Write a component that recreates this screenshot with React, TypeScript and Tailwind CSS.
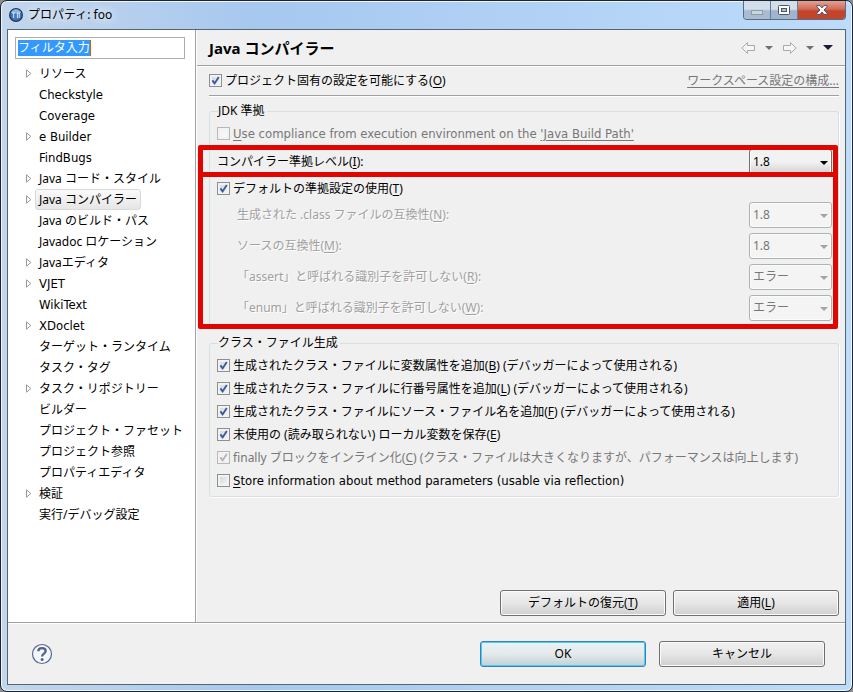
import { useState } from "react";
import type { ReactNode } from "react";

const treeItems = [
  { label: "リソース", expandable: true },
  { label: "Checkstyle", latin: true },
  { label: "Coverage", latin: true },
  { label: "e Builder", expandable: true, latin: true },
  { label: "FindBugs", latin: true },
  { label: "Java コード・スタイル", expandable: true },
  { label: "Java コンパイラー", expandable: true },
  { label: "Java のビルド・パス" },
  { label: "Javadoc ロケーション" },
  { label: "Javaエディタ", expandable: true },
  { label: "VJET", expandable: true, latin: true },
  { label: "WikiText", latin: true },
  { label: "XDoclet", expandable: true, latin: true },
  { label: "ターゲット・ランタイム" },
  { label: "タスク・タグ" },
  { label: "タスク・リポジトリー", expandable: true },
  { label: "ビルダー" },
  { label: "プロジェクト・ファセット" },
  { label: "プロジェクト参照" },
  { label: "プロパティエディタ" },
  { label: "検証", expandable: true },
  { label: "実行/デバッグ設定" },
];

const classFileOptions = [
  { before: "生成されたクラス・ファイルに変数属性を追加(", key: "B", after: ") (デバッガーによって使用される)", checked: true },
  { before: "生成されたクラス・ファイルに行番号属性を追加(", key: "L", after: ") (デバッガーによって使用される)", checked: true },
  { before: "生成されたクラス・ファイルにソース・ファイル名を追加(", key: "F", after: ") (デバッガーによって使用される)", checked: true },
  { before: "未使用の (読み取られない) ローカル変数を保存(", key: "E", after: ")", checked: true },
  { before: "finally ブロックをインライン化(", key: "C", after: ") (クラス・ファイルは大きくなりますが、パフォーマンスは向上します)", checked: true, disabled: true },
  { before: "", key: "S", after: "tore information about method parameters (usable via reflection)", checked: false, latin: true },
];

const complianceFields = [
  { id: "classCompat", before: "生成された .class ファイルの互換性(", key: "N", options: ["1.8", "1.7", "1.6"] },
  { id: "sourceCompat", before: "ソースの互換性(", key: "M", options: ["1.8", "1.7", "1.6"] },
  { id: "assertId", before: "「assert」と呼ばれる識別子を許可しない(", key: "R", options: ["エラー", "警告", "無視"] },
  { id: "enumId", before: "「enum」と呼ばれる識別子を許可しない(", key: "W", options: ["エラー", "警告", "無視"] },
];

// labels with no Japanese in them
const latinText = "font-['DejaVu_Sans_Condensed',sans-serif] text-[13px] leading-4";

function Key({ children }: { children: ReactNode }) {
  return <span className="underline underline-offset-2">{children}</span>;
}

function CheckRow({
  children,
  checked = false,
  disabled = false,
  latin = false,
}: {
  children: ReactNode;
  checked?: boolean;
  disabled?: boolean;
  latin?: boolean;
}) {
  const [on, setOn] = useState(checked);

  return (
    <label className={`flex items-center gap-[3px] whitespace-nowrap ${disabled ? "text-[#777777]" : ""}`}>
      <span className="relative flex h-[13px] w-[13px] shrink-0">
        <input
          type="checkbox"
          checked={on}
          disabled={disabled}
          onChange={(e) => setOn(e.target.checked)}
          className="h-[13px] w-[13px] appearance-none border border-[#8e8f8f] bg-linear-to-br from-[#cfd4da] to-[#f8f8f8] shadow-[inset_0_0_0_2px_#f2f2f2] disabled:border-[#b8b8b8] disabled:from-[#f0f0f0] disabled:to-[#fafafa]"
        />
        {on && (
          <svg viewBox="0 0 13 13" className="pointer-events-none absolute inset-0 h-[13px] w-[13px]">
            <path
              d="M3.4 6.4 L5.6 9.4 L9.8 3"
              fill="none"
              stroke={disabled ? "#b4b4b4" : "#3c5a9a"}
              strokeWidth="1.9"
            />
          </svg>
        )}
      </span>
      <span className={latin ? latinText : ""}>{children}</span>
    </label>
  );
}

function Combo({ id, options, disabled = false }: { id: string; options: string[]; disabled?: boolean }) {
  return (
    <div className="relative w-[83px] shrink-0">
      <select
        id={id}
        disabled={disabled}
        className="block h-[26px] w-full appearance-none rounded-[3px] border border-[#707070] bg-linear-to-b from-[#f2f2f2] from-50% to-[#cfcfcf] pl-[3px] text-black opacity-100 shadow-[inset_0_0_0_1px_#fbfbfb] disabled:border-[#adb2b5] disabled:from-[#f4f4f4] disabled:to-[#f4f4f4] disabled:text-[#777777]"
      >
        {options.map((o) => (
          <option key={o}>{o}</option>
        ))}
      </select>
      <svg viewBox="0 0 8 4" className="pointer-events-none absolute top-3 right-1 h-1 w-2">
        <path d="M0 0H8L4 4Z" fill={disabled ? "#a3a3a3" : "#000"} />
      </svg>
    </div>
  );
}

function PushButton({ children, primary = false }: { children: ReactNode; primary?: boolean }) {
  return (
    <button
      type="button"
      className={
        primary
          ? "h-[26px] w-[166px] rounded-[3px] border border-[#3c7fb1] bg-linear-to-b from-[#edf1f3] via-[#e3eaed] via-50% to-[#c3d0d6] shadow-[inset_0_0_0_1px_#46d0f5]"
          : "h-[26px] w-[166px] rounded-[3px] border border-[#707070] bg-linear-to-b from-[#f2f2f2] via-[#e6e6e6] via-50% to-[#cfcfcf] shadow-[inset_0_0_0_1px_#fbfbfb]"
      }
    >
      {children}
    </button>
  );
}

function Group({ title, children }: { title: string; children: ReactNode }) {
  return (
    <fieldset className="min-w-0 rounded-[3px] border border-[#d5dfe5] pr-1.5 pl-[7px] shadow-[1px_1px_0_#ffffff]">
      <legend className="ml-px pr-0.5 leading-4">{title}</legend>
      {children}
    </fieldset>
  );
}

function TitleBar() {
  return (
    <header className="flex h-7 items-start justify-between">
      <div className="flex h-7 items-center gap-[5px] pl-0.5">
        <svg viewBox="0 0 14 14" className="h-[14px] w-[14px]">
          <circle cx="7" cy="7" r="7" fill="#29304f" />
          <circle cx="7" cy="7" r="5.8" fill="#3d78bd" />
          <path d="M2 5a5.2 5.2 0 0 1 10 0Z" fill="#86b5e2" />
          <path d="M3 5H6.4M4.7 5V10M7.6 5H11M8.4 5V10M10.2 5V10" stroke="#d5e8fa" strokeWidth="1" />
        </svg>
        <h1 className="[text-shadow:0_0_8px_#fff,0_0_12px_#fff]">プロパティ: foo</h1>
      </div>
      <div className="flex h-[19px] overflow-hidden rounded-b-[4px] border border-t-0 border-[#5b6b81]">
        <button
          type="button"
          aria-label="最小化"
          className="flex w-[27px] items-center justify-center border-r border-[#6b7d95] bg-linear-to-b from-[#d3deeb] from-45% to-[#a9bbd1] to-55%"
        >
          <svg viewBox="0 0 12 5" className="mt-1 h-[5px] w-3">
            <rect x="0.5" y="0.5" width="11" height="4" fill="#ccd6df" stroke="#8d9cac" />
          </svg>
        </button>
        <button
          type="button"
          aria-label="最大化"
          className="flex w-[27px] items-center justify-center border-r border-[#6b7d95] bg-linear-to-b from-[#d3deeb] from-45% to-[#a0b4ce] to-55%"
        >
          <svg viewBox="0 0 12 10" className="h-[10px] w-3">
            <rect x="0.5" y="0.5" width="11" height="9" rx="1" fill="#fff" stroke="#4c566b" />
            <rect x="3.5" y="3.5" width="5" height="3" fill="#aebfd3" stroke="#4c566b" />
          </svg>
        </button>
        <button
          type="button"
          aria-label="閉じる"
          className="flex w-[47px] items-center justify-center bg-linear-to-b from-[#e5a294] from-0% via-[#d06a58] via-45% to-[#c2442b] to-55%"
        >
          <svg viewBox="0 0 12 10" className="h-[10px] w-3">
            <path
              d="M0.8 0.6H4L6 2.9L8 0.6H11.2V1.6L8 5L11.2 8.4V9.4H8L6 7.1L4 9.4H0.8V8.4L4 5L0.8 1.6Z"
              fill="#fff"
              stroke="#4c4f66"
            />
          </svg>
        </button>
      </div>
    </header>
  );
}

function NavArrow({ back = false }: { back?: boolean }) {
  return (
    <svg viewBox="0 0 15 12" className="h-3 w-[15px]">
      <path
        d={
          back
            ? "M0.8 6L6.5 0.7V3.5H13.5V8.5H6.5V11.3Z"
            : "M14.2 6L8.5 0.7V3.5H1.5V8.5H8.5V11.3Z"
        }
        fill="#f6f6f6"
        stroke="#a9a9a9"
      />
    </svg>
  );
}

function DownArrow() {
  return (
    <svg viewBox="0 0 8 4" className="h-1 w-2">
      <path d="M0 0H8L4 4Z" fill="#707070" />
    </svg>
  );
}

function Sidebar() {
  const [filter, setFilter] = useState("フィルタ入力");
  const [selected, setSelected] = useState("Java コンパイラー");

  return (
    <nav className="w-[188px] shrink-0 border-r border-[#a0a0a0] bg-white">
      <div className="mt-[7px] mr-[10px] ml-[7px] h-[22px] border border-[#abadb3] p-0.5">
        <input
          type="text"
          aria-label="フィルタ入力"
          value={filter}
          onChange={(e) => setFilter(e.target.value)}
          className="block h-4 w-[73px] border-r border-[#c86400] bg-[#3399ff] leading-4 text-white outline-none"
        />
      </div>
      <ul className="mt-1 pl-[17px]">
        {treeItems.map((item) => (
          <li key={item.label} className="flex h-[21px] items-center">
            <span className="w-[10px] shrink-0">
              {item.expandable && (
                <svg viewBox="0 0 7 9" className="h-[9px] w-[7px]">
                  <path d="M1.5 0.8L5.8 4.5L1.5 8.2Z" fill="#fff" stroke="#999999" />
                </svg>
              )}
            </span>
            <button
              type="button"
              onClick={() => setSelected(item.label)}
              className={
                item.label === selected
                  ? "h-[21px] rounded-[3px] border border-[#d9d9d9] bg-linear-to-b from-[#fafafa] to-[#e6e6e6] px-[3px] whitespace-nowrap"
                  : "h-[21px] border border-transparent px-[3px] whitespace-nowrap"
              }
            >
              <span className={item.latin ? latinText : ""}>{item.label}</span>
            </button>
          </li>
        ))}
      </ul>
    </nav>
  );
}

export default function App() {
  return (
    <div className="bg-[#8c8c8c]">
      <div className="flex min-h-screen flex-col rounded-[7px] border border-[#1c2431] bg-linear-to-r from-[#c3d6ec] via-[#a7c8ef] via-30% to-[#bddcfb] px-1.5 pb-1.5 font-['Noto_Sans','Noto_Sans_CJK_JP',sans-serif] text-[12px] leading-4 text-black shadow-[inset_0_0_0_1px_#eef6ff]">
        <TitleBar />

        <div className="flex flex-1 flex-col border border-[#56666f] bg-[#f0f0f0]">
          <div className="flex flex-1 border-b border-[#a0a0a0]">
            <Sidebar />

            <main className="flex min-w-0 flex-1 flex-col border-l border-white">
              <div className="flex h-9 items-center justify-between border-b border-[#a0a0a0] pr-3 pl-3 shadow-[0_1px_0_#ffffff]">
                <h2 className="text-[15px] font-bold">Java コンパイラー</h2>
                <div className="flex items-center gap-[9px]">
                  <button type="button" aria-label="戻る">
                    <NavArrow back />
                  </button>
                  <DownArrow />
                  <button type="button" aria-label="進む">
                    <NavArrow />
                  </button>
                  <DownArrow />
                  <button type="button" aria-label="メニュー">
                    <svg viewBox="0 0 10 5" className="h-[5px] w-[10px]">
                      <path d="M0 0H10L5 5Z" fill="#22153c" />
                    </svg>
                  </button>
                </div>
              </div>

              <div className="flex flex-1 flex-col pr-1.5 pb-1.5 pl-3">
                <div className="flex h-[30px] items-center justify-between border-b border-[#a0a0a0] shadow-[0_1px_0_#ffffff]">
                  <CheckRow checked>
                    プロジェクト固有の設定を可能にする(<Key>O</Key>)
                  </CheckRow>
                  <a href="#workspace" className="text-[#777777] underline underline-offset-2">
                    ワークスペース設定の構成...
                  </a>
                </div>

                <div className="mt-[7px]">
                  <Group title="JDK 準拠">
                    <div className="flex h-[29px] items-center">
                      <CheckRow disabled latin>
                        <Key>U</Key>se compliance from execution environment on the{" "}
                        <a href="#build-path" className="underline underline-offset-2">
                          'Java Build Path'
                        </a>
                      </CheckRow>
                    </div>
                    <div className="relative flex h-[27px] items-center justify-between">
                      <label htmlFor="compliance">
                        コンパイラー準拠レベル(<Key>I</Key>):
                      </label>
                      <Combo id="compliance" options={["1.8", "1.7", "1.6", "1.5"]} />
                      {/* highlight frame around the compliance level */}
                      <div className="pointer-events-none absolute -top-[3px] -right-1.5 -bottom-0.5 -left-[19px] rounded-xs border-[5px] border-[#df0500]" />
                    </div>
                    <div className="relative">
                      <div className="flex h-[27px] items-center">
                        <CheckRow checked>
                          デフォルトの準拠設定の使用(<Key>T</Key>)
                        </CheckRow>
                      </div>
                      <div className="flex flex-col gap-[5px] pb-1 pl-5">
                        {complianceFields.map((f) => (
                          <div key={f.id} className="flex items-center justify-between">
                            <label htmlFor={f.id} className="text-[#a0a0a0] [text-shadow:1px_1px_0_#fff]">
                              {f.before}
                              <Key>{f.key}</Key>):
                            </label>
                            <Combo id={f.id} options={f.options} disabled />
                          </div>
                        ))}
                      </div>
                      {/* highlight frame around the default settings */}
                      <div className="pointer-events-none absolute -top-[3px] -right-1.5 -bottom-1 -left-[19px] rounded-xs border-[5px] border-[#df0500]" />
                    </div>
                  </Group>
                </div>

                <div className="mt-[9px]">
                  <Group title="クラス・ファイル生成">
                    <div className="pt-[3px] pb-1">
                      {classFileOptions.map((o) => (
                        <div key={o.key} className="flex h-[23px] items-center">
                          <CheckRow checked={o.checked} disabled={o.disabled} latin={o.latin}>
                            {o.before}
                            <Key>{o.key}</Key>
                            {o.after}
                          </CheckRow>
                        </div>
                      ))}
                    </div>
                  </Group>
                </div>

                <div className="mt-auto flex justify-end gap-[7px]">
                  <PushButton>
                    デフォルトの復元(<Key>T</Key>)
                  </PushButton>
                  <PushButton>
                    適用(<Key>L</Key>)
                  </PushButton>
                </div>
              </div>
            </main>
          </div>

          <footer className="flex h-[61px] items-center justify-between border-t border-white pr-5 pl-[23px]">
            <button type="button" aria-label="ヘルプ">
              <svg viewBox="0 0 22 22" className="h-[22px] w-[22px]">
                <circle cx="11" cy="11" r="9.5" fill="#f4f6fa" stroke="#55698f" strokeWidth="1.2" />
                <path
                  d="M7.3 8.3C7.3 3.9 14.7 4.1 14.7 8.1C14.7 10.6 11.1 10.6 11.1 13.4"
                  fill="none"
                  stroke="#4f648c"
                  strokeWidth="2.3"
                />
                <circle cx="11.1" cy="16.4" r="1.5" fill="#4f648c" />
              </svg>
            </button>
            <div className="flex gap-[13px]">
              <PushButton primary>OK</PushButton>
              <PushButton>キャンセル</PushButton>
            </div>
          </footer>
        </div>
      </div>
    </div>
  );
}
